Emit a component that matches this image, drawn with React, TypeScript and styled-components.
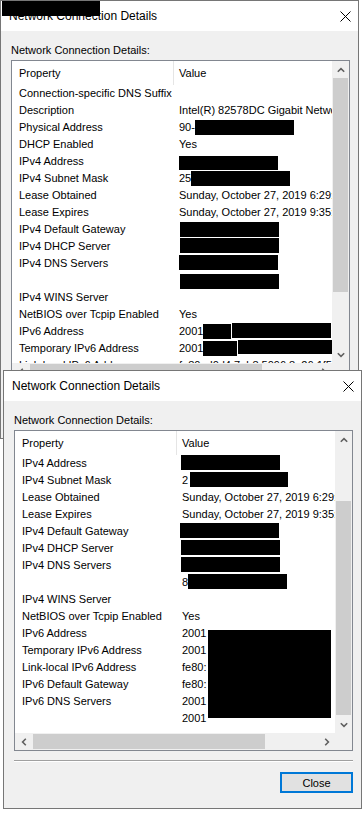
import React from "react";
import styled, { createGlobalStyle } from "styled-components";

type Box = { w: number; h?: number; dy?: number; ml?: number };
type Seg = string | Box;
type Row = { p: string; v?: Seg[] };

const LEASE_ON = "Sunday, October 27, 2019 6:29:51 PM";
const LEASE_OFF = "Sunday, October 27, 2019 9:35:02 PM";

const backRows: Row[] = [
  { p: "Connection-specific DNS Suffix" },
  { p: "Description", v: ["Intel(R) 82578DC Gigabit Network Connection"] },
  { p: "Physical Address", v: ["90-", { w: 99, dy: 1 }] },
  { p: "DHCP Enabled", v: ["Yes"] },
  { p: "IPv4 Address", v: [{ w: 99, h: 14, dy: 3 }] },
  { p: "IPv4 Subnet Mask", v: ["25", { w: 99, dy: 1 }] },
  { p: "Lease Obtained", v: [LEASE_ON] },
  { p: "Lease Expires", v: [LEASE_OFF] },
  { p: "IPv4 Default Gateway", v: [{ w: 99, dy: 1, ml: 1 }] },
  { p: "IPv4 DHCP Server", v: [{ w: 99, ml: 1 }] },
  { p: "IPv4 DNS Servers", v: [{ w: 99 }] },
  { p: "", v: [{ w: 99, dy: 2, ml: 1 }] },
  { p: "IPv4 WINS Server" },
  { p: "NetBIOS over Tcpip Enabled", v: ["Yes"] },
  { p: "IPv6 Address", v: ["2001", { w: 28, dy: 1 }, { w: 99, ml: 1 }] },
  { p: "Temporary IPv6 Address", v: ["2001", { w: 34, dy: 1 }, { w: 99, h: 14, ml: 1 }] },
  { p: "Link-local IPv6 Address", v: ["fe80::d0d4:7eb8:5096:8e26:1f5d%7"] },
];

const frontRows: Row[] = [
  { p: "IPv4 Address", v: [{ w: 99, ml: -1 }] },
  { p: "IPv4 Subnet Mask", v: ["2", { w: 98, ml: 2 }] },
  { p: "Lease Obtained", v: [LEASE_ON] },
  { p: "Lease Expires", v: [LEASE_OFF] },
  { p: "IPv4 Default Gateway", v: [{ w: 99, ml: -2 }] },
  { p: "IPv4 DHCP Server", v: [{ w: 99, ml: -1 }] },
  { p: "IPv4 DNS Servers", v: [{ w: 99, ml: -1 }] },
  { p: "", v: ["8", { w: 99 }] },
  { p: "IPv4 WINS Server" },
  { p: "NetBIOS over Tcpip Enabled", v: ["Yes"] },
  { p: "IPv6 Address", v: ["2001"] },
  { p: "Temporary IPv6 Address", v: ["2001"] },
  { p: "Link-local IPv6 Address", v: ["fe80:"] },
  { p: "IPv6 Default Gateway", v: ["fe80:"] },
  { p: "IPv6 DNS Servers", v: ["2001"] },
  { p: "", v: ["2001"] },
];

const GlobalStyle = createGlobalStyle`
  html, body {
    margin: 0;
    padding: 0;
    background: #fff;
  }
  body {
    font-family: "Liberation Sans", Arial, sans-serif;
    color: #000;
  }
`;

const Desktop = styled.div`
  position: relative;
  width: 364px;
  height: 822px;
  background: #fff;
  overflow: hidden;
`;

const Window = styled.div<{ $left: number; $top: number }>`
  position: absolute;
  left: ${(p) => p.$left}px;
  top: ${(p) => p.$top}px;
  width: 359px;
  box-sizing: border-box;
  display: flex;
  flex-direction: column;
  border: 1px solid #767676;
  background: #f0f0f0;
`;

const TitleBar = styled.div`
  height: 30px;
  display: flex;
  align-items: center;
  padding: 0 7px 0 8px;
  background: #fff;
  font-size: 12px;
`;

const Title = styled.div`
  flex: 1;
  white-space: nowrap;
`;

const TitleCensor = styled.div`
  position: absolute;
  left: 1px;
  top: 0;
  width: 98px;
  height: 15px;
  background: #000;
`;

const Body = styled.div`
  display: flex;
  flex-direction: column;
  padding: 13px 8px 15px 10px;
  font-size: 11px;
`;

const Label = styled.div`
  line-height: 13px;
  margin-bottom: 3px;
`;

const ListBox = styled.div`
  width: 339px;
  height: 321px;
  box-sizing: border-box;
  border: 1px solid #828790;
  display: grid;
  grid-template-columns: 1fr 17px;
  grid-template-rows: 1fr 17px;
`;

const Viewport = styled.div`
  position: relative;
  overflow: hidden;
  background: #fff;
`;

const Header = styled.div`
  display: flex;
  height: 24px;
  align-items: center;
  white-space: nowrap;
`;

const HeadProp = styled.div`
  width: 162px;
  height: 100%;
  box-sizing: border-box;
  display: flex;
  align-items: center;
  padding-left: 7px;
  border-right: 1px solid #e5e5e5;
`;

const HeadValue = styled.div`
  padding-left: 5px;
`;

const ListRow = styled.div`
  display: flex;
  height: 17px;
  line-height: 17px;
  white-space: nowrap;
`;

const PropCell = styled.div`
  width: 162px;
  flex: none;
  box-sizing: border-box;
  padding-left: 7px;
  overflow: hidden;
`;

const ValueCell = styled.div`
  display: flex;
  align-items: flex-start;
  flex: none;
  padding-left: 5px;
`;

const Censor = styled.span<{ $w: number; $h: number; $dy: number; $ml: number }>`
  display: block;
  flex: none;
  background: #000;
  width: ${(p) => p.$w}px;
  height: ${(p) => p.$h}px;
  margin-top: ${(p) => p.$dy}px;
  margin-left: ${(p) => p.$ml}px;
`;

const CensorBlock = styled.div<{ $x: number; $y: number; $w: number; $h: number }>`
  position: absolute;
  left: ${(p) => p.$x}px;
  top: ${(p) => p.$y}px;
  width: ${(p) => p.$w}px;
  height: ${(p) => p.$h}px;
  background: #000;
`;

const VScroll = styled.div`
  display: flex;
  flex-direction: column;
  background: #f0f0f0;
`;

const HScroll = styled.div`
  display: flex;
  background: #f0f0f0;
`;

const ArrowBox = styled.div`
  width: 17px;
  height: 17px;
  flex: none;
  display: flex;
  align-items: center;
  justify-content: center;
`;

const VTrack = styled.div`
  flex: 1;
  display: flex;
  flex-direction: column;
`;

const HTrack = styled.div`
  flex: 1;
  display: flex;
`;

const VThumb = styled.div<{ $top: number; $size: number }>`
  margin: ${(p) => p.$top}px 1px 0;
  height: ${(p) => p.$size}px;
  background: #cdcdcd;
`;

const HThumb = styled.div<{ $left: number; $size: number }>`
  margin: 1px 0 1px ${(p) => p.$left}px;
  width: ${(p) => p.$size}px;
  background: #cdcdcd;
`;

const Corner = styled.div`
  background: #f0f0f0;
`;

const Separator = styled.div`
  margin-top: 9px;
  height: 0;
  border-top: 1px solid #a0a0a0;
  border-bottom: 1px solid #fff;
`;

const CloseButton = styled.button`
  align-self: flex-end;
  margin-top: 10px;
  width: 73px;
  height: 21px;
  padding: 0;
  box-sizing: border-box;
  border: 2px solid #0078d7;
  background: #e1e1e1;
  font-family: "Liberation Sans", Arial, sans-serif;
  font-size: 11px;
  color: #000;
`;

const rotations = { up: 0, down: 180, left: 270, right: 90 };

const Chevron: React.FC<{ dir: keyof typeof rotations }> = ({ dir }) => (
  <svg width="8" height="8" viewBox="0 0 8 8" style={{ transform: `rotate(${rotations[dir]}deg)` }}>
    <polyline points="0.8,5.8 4,2.6 7.2,5.8" fill="none" stroke="#606060" strokeWidth="1.6" />
  </svg>
);

const CloseIcon = () => (
  <svg width="11" height="11" viewBox="0 0 11 11">
    <path d="M0.5 0.5 L10.5 10.5 M10.5 0.5 L0.5 10.5" stroke="#000" strokeWidth="1" />
  </svg>
);

interface DialogProps {
  left: number;
  top: number;
  rows: Row[];
  vThumbTop: number;
  censorTitle?: boolean;
  block?: { x: number; y: number; w: number; h: number };
}

const Dialog: React.FC<DialogProps> = ({ left, top, rows, vThumbTop, censorTitle, block }) => (
  <Window $left={left} $top={top}>
    <TitleBar>
      <Title>Network Connection Details</Title>
      <CloseIcon />
    </TitleBar>
    {censorTitle && <TitleCensor />}
    <Body>
      <Label>Network Connection Details:</Label>
      <ListBox>
        <Viewport>
          <Header>
            <HeadProp>Property</HeadProp>
            <HeadValue>Value</HeadValue>
          </Header>
          {rows.map((row, i) => (
            <ListRow key={i}>
              <PropCell>{row.p}</PropCell>
              <ValueCell>
                {(row.v || []).map((seg, j) =>
                  typeof seg === "string" ? (
                    <span key={j}>{seg}</span>
                  ) : (
                    <Censor key={j} $w={seg.w} $h={seg.h ?? 15} $dy={seg.dy ?? 0} $ml={seg.ml ?? 0} />
                  )
                )}
              </ValueCell>
            </ListRow>
          ))}
          {block && <CensorBlock $x={block.x} $y={block.y} $w={block.w} $h={block.h} />}
        </Viewport>
        <VScroll>
          <ArrowBox><Chevron dir="up" /></ArrowBox>
          <VTrack>
            <VThumb $top={vThumbTop} $size={214} />
          </VTrack>
          <ArrowBox><Chevron dir="down" /></ArrowBox>
        </VScroll>
        <HScroll>
          <ArrowBox><Chevron dir="left" /></ArrowBox>
          <HTrack>
            <HThumb $left={1} $size={232} />
          </HTrack>
          <ArrowBox><Chevron dir="right" /></ArrowBox>
        </HScroll>
        <Corner />
      </ListBox>
      <Separator />
      <CloseButton>Close</CloseButton>
    </Body>
  </Window>
);

export default function App() {
  return (
    <>
      <GlobalStyle />
      <Desktop>
        <Dialog left={0} top={0} rows={backRows} vThumbTop={0} censorTitle />
        <Dialog
          left={3}
          top={370}
          rows={frontRows}
          vThumbTop={53}
          block={{ x: 193, y: 199, w: 123, h: 88 }}
        />
      </Desktop>
    </>
  );
}
